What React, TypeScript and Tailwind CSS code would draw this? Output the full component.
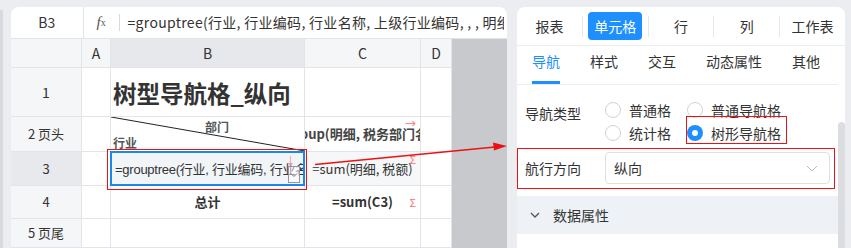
import React from "react";

const font = "font-['Noto_Sans_CJK_SC','Liberation_Sans',sans-serif]";
const cell = "border-r border-b border-[#e3e4e7] flex items-center";
const head = "border-r border-b border-[#e3e4e7] bg-[#f5f6f8] flex items-center justify-center text-[14px] text-[#333]";

function Radio({ label, checked }: { label: string; checked?: boolean }) {
  return (
    <div className="flex items-center gap-[8px]">
      {checked ? (
        <span className="flex h-[16px] w-[16px] items-center justify-center rounded-full bg-[#1e8fff]">
          <span className="h-[6px] w-[6px] rounded-full bg-white" />
        </span>
      ) : (
        <span className="h-[16px] w-[16px] rounded-full border border-[#cfd2d8] bg-white" />
      )}
      <span className="text-[14px] leading-[20px] text-[#333]">{label}</span>
    </div>
  );
}

function SheetPanel() {
  return (
    <div className="flex w-[496px] flex-col overflow-hidden rounded-t-[8px] bg-white">
      {/* formula bar */}
      <div className="flex h-[32px] shrink-0 items-center border-b border-[#e3e4e7]">
        <div className="flex h-full w-[75px] items-center justify-center border-r border-[#e3e4e7] text-[14px] text-[#333]">
          B3
        </div>
        <div className="flex w-[36px] items-center justify-center font-['Liberation_Serif',serif] text-[15px] italic text-[#555]">
          f<span className="text-[10px] not-italic">x</span>
        </div>
        <div className="h-[17px] w-px bg-[#d8d9dc]" />
        <div className="mr-[3px] overflow-hidden whitespace-nowrap pl-[8px] text-[14px] tracking-[0.3px] text-[#333]">
          =grouptree(行业, 行业编码, 行业名称, 上级行业编码, , , 明细)
        </div>
      </div>

      {/* grid */}
      <div className="grid flex-1 grid-cols-[71px_29px_194px_116px_31px_55px] grid-rows-[29px_49px_35px_34px_33px_1fr]">
        <div className={head} />
        <div className={head}>A</div>
        <div className={head + " !bg-[#e7e8eb]"}>B</div>
        <div className={head}>C</div>
        <div className={head}>D</div>
        <div className="row-span-6 bg-[#c8c9cd]" />

        {/* row 1 */}
        <div className={head + " text-[13px]"}>1</div>
        <div className={cell} />
        <div className={cell + " pl-[2px] pt-[4px] text-[23.5px] font-bold text-[#333] whitespace-nowrap"}>树型导航格_纵向</div>
        <div className={cell} />
        <div className={cell} />

        {/* row 2 */}
        <div className={head + " !text-[13px]"}>2 页头</div>
        <div className={cell} />
        <div className={cell + " relative"}>
          <svg className="absolute inset-0" width="194" height="35">
            <line x1="0" y1="0" x2="194" y2="34" stroke="#222" strokeWidth="1" />
          </svg>
          <span className="absolute left-[94px] top-[1px] text-[12px] font-bold text-[#555]">部门</span>
          <span className="absolute left-[2px] top-[17px] text-[12px] font-bold text-[#555]">行业</span>
        </div>
        <div className={cell + " relative justify-center overflow-hidden"}>
          <span className="whitespace-nowrap text-[13px] font-bold text-[#444]">=group(明细, 税务部门名称)</span>
          <span className="absolute right-[4px] top-[1px] text-[11px] leading-none text-[#ff6d6d]">→</span>
        </div>
        <div className={cell} />

        {/* row 3 */}
        <div className={head + " !bg-[#e8e9ec] !text-[13px]"}>3</div>
        <div className={cell} />
        <div className={cell + " relative bg-[#f2f5f8]"}>
          <span className="overflow-hidden whitespace-nowrap pl-[4px] pt-[3px] font-['Liberation_Sans','Noto_Sans_CJK_SC',sans-serif] text-[13px] tracking-[-0.25px] text-[#333]">
            =grouptree(行业, 行业编码, 行业名称)
          </span>
          <div className="absolute inset-[-1px] border-2 border-[#1a87ee]" />
          <span className="absolute right-[8px] top-[3px] text-[11px] leading-none text-[#ff8ea0]">↓</span>
          <div className="absolute right-[4px] top-[14px] flex h-[17px] w-[12px] items-center justify-center border border-[#9a90a8] bg-white/50">
            <svg width="8" height="6" viewBox="0 0 8 6">
              <path d="M1 1.5 L4 4.5 L7 1.5" fill="none" stroke="#777" strokeWidth="1" />
            </svg>
          </div>
        </div>
        <div className={cell + " relative justify-center bg-[#f5f7f9]"}>
          <span className="whitespace-nowrap text-[13px] text-[#333]">=sum(明细, 税额)</span>
          <span className="absolute right-[4px] top-[2px] text-[11px] leading-none text-[#ff6d6d]">Σ</span>
        </div>
        <div className={cell} />

        {/* row 4 */}
        <div className={head + " !text-[13px]"}>4</div>
        <div className={cell} />
        <div className={cell + " justify-center text-[13px] font-bold text-[#333]"}>总计</div>
        <div className={cell + " relative justify-center"}>
          <span className="whitespace-nowrap text-[13px] font-bold text-[#333]">=sum(C3)</span>
          <span className="absolute right-[4px] top-[11px] text-[11px] leading-none text-[#ff6d6d]">Σ</span>
        </div>
        <div className={cell} />

        {/* row 5 */}
        <div className={head + " !text-[13px]"}>5 页尾</div>
        <div className={cell} />
        <div className={cell} />
        <div className={cell} />
        <div className={cell} />
      </div>
    </div>
  );
}

function PropertyPanel() {
  const tabs = ["报表", "单元格", "行", "列", "工作表"];
  const sub = ["导航", "样式", "交互", "动态属性", "其他"];
  return (
    <div className="relative flex w-[328px] flex-col overflow-hidden rounded-t-[8px] bg-white">
      <div className="flex h-[39px] shrink-0 items-center border-b border-[#ebedf0]">
        {tabs.map((t, i) => (
          <React.Fragment key={t}>
            {i > 0 && <div className="h-[21px] w-px bg-[#e4e6ea]" />}
            <div className="flex flex-1 items-center justify-center">
              <span
                className={
                  t === "单元格"
                    ? "flex h-[28px] items-center rounded-[4px] bg-[#1e8fff] px-[6px] text-[14px] text-white"
                    : "text-[14px] text-[#333]"
                }
              >
                {t}
              </span>
            </div>
          </React.Fragment>
        ))}
      </div>

      <div className="mr-[7px] flex h-[39px] shrink-0 gap-[30px] border-b border-[#ebedf0] pl-[15px]">
        {sub.map((t, i) => (
          <div
            key={t}
            className={
              i === 0
                ? "flex items-center border-b-[3px] border-[#1e8fff] pb-[4px] text-[14px] text-[#1e8fff]"
                : "flex items-center pb-[7px] text-[14px] text-[#333]"
            }
          >
            {t}
          </div>
        ))}
      </div>

      <div className="mr-[7px] flex flex-col">
        <div className="mt-[15px] flex px-[8px]">
          <div className="mt-[3px] w-[80px] text-[14px] leading-[20px] text-[#333]">导航类型</div>
          <div className="grid grid-cols-[82px_auto] gap-y-[3px]">
            <Radio label="普通格" />
            <Radio label="普通导航格" />
            <Radio label="统计格" />
            <Radio label="树形导航格" checked />
          </div>
        </div>

        <div className="mt-[9px] flex items-center px-[8px]">
          <div className="w-[80px] text-[14px] text-[#333]">航行方向</div>
          <div className="flex h-[32px] w-[225px] items-center justify-between rounded-[4px] border border-[#dcdfe6] pl-[8px] pr-[11px]">
            <span className="text-[14px] text-[#333]">纵向</span>
            <svg width="12" height="7" viewBox="0 0 12 7">
              <path d="M1 1 L6 6 L11 1" fill="none" stroke="#b4b8bf" strokeWidth="1" />
            </svg>
          </div>
        </div>

        <div className="mt-[12px] flex h-[38px] items-center gap-[13px] bg-[#eef2f6] pl-[13px]">
          <svg width="10" height="6" viewBox="0 0 10 6">
            <path d="M1 1 L5 5 L9 1" fill="none" stroke="#555" strokeWidth="1.3" />
          </svg>
          <span className="text-[14px] text-[#333]">数据属性</span>
        </div>
      </div>

      <div className="absolute bottom-0 right-0 top-[115px] w-[7px] rounded-t-[4px] bg-[#dcdde1]" />
    </div>
  );
}

export default function App() {
  return (
    <div className={`relative flex h-[248px] w-[851px] overflow-hidden bg-[#ebedf0] pt-[7px] ${font}`}>
      <div className="mt-[3px] w-[3px] shrink-0 bg-[#d9dadd]" />
      <div className="ml-[8px] flex">
        <SheetPanel />
      </div>
      <div className="ml-[10px] flex">
        <PropertyPanel />
      </div>

      {/* annotations */}
      <div className="pointer-events-none absolute left-[107px] top-[149px] h-[41px] w-[200px] border-[1.5px] border-[#ee1111]" />
      <div className="pointer-events-none absolute left-[686px] top-[116px] h-[28px] w-[101px] border-[1.5px] border-[#ee1111]" />
      <div className="pointer-events-none absolute left-[517px] top-[148px] h-[41px] w-[318px] border-[1.5px] border-[#ee1111]" />
      <svg className="pointer-events-none absolute left-0 top-0" width="851" height="248">
        <line x1="315" y1="164.5" x2="495" y2="147" stroke="#ee1111" strokeWidth="1.3" />
        <polygon points="507,146 493,142.5 494,150.5" fill="#ee1111" />
      </svg>
    </div>
  );
}
